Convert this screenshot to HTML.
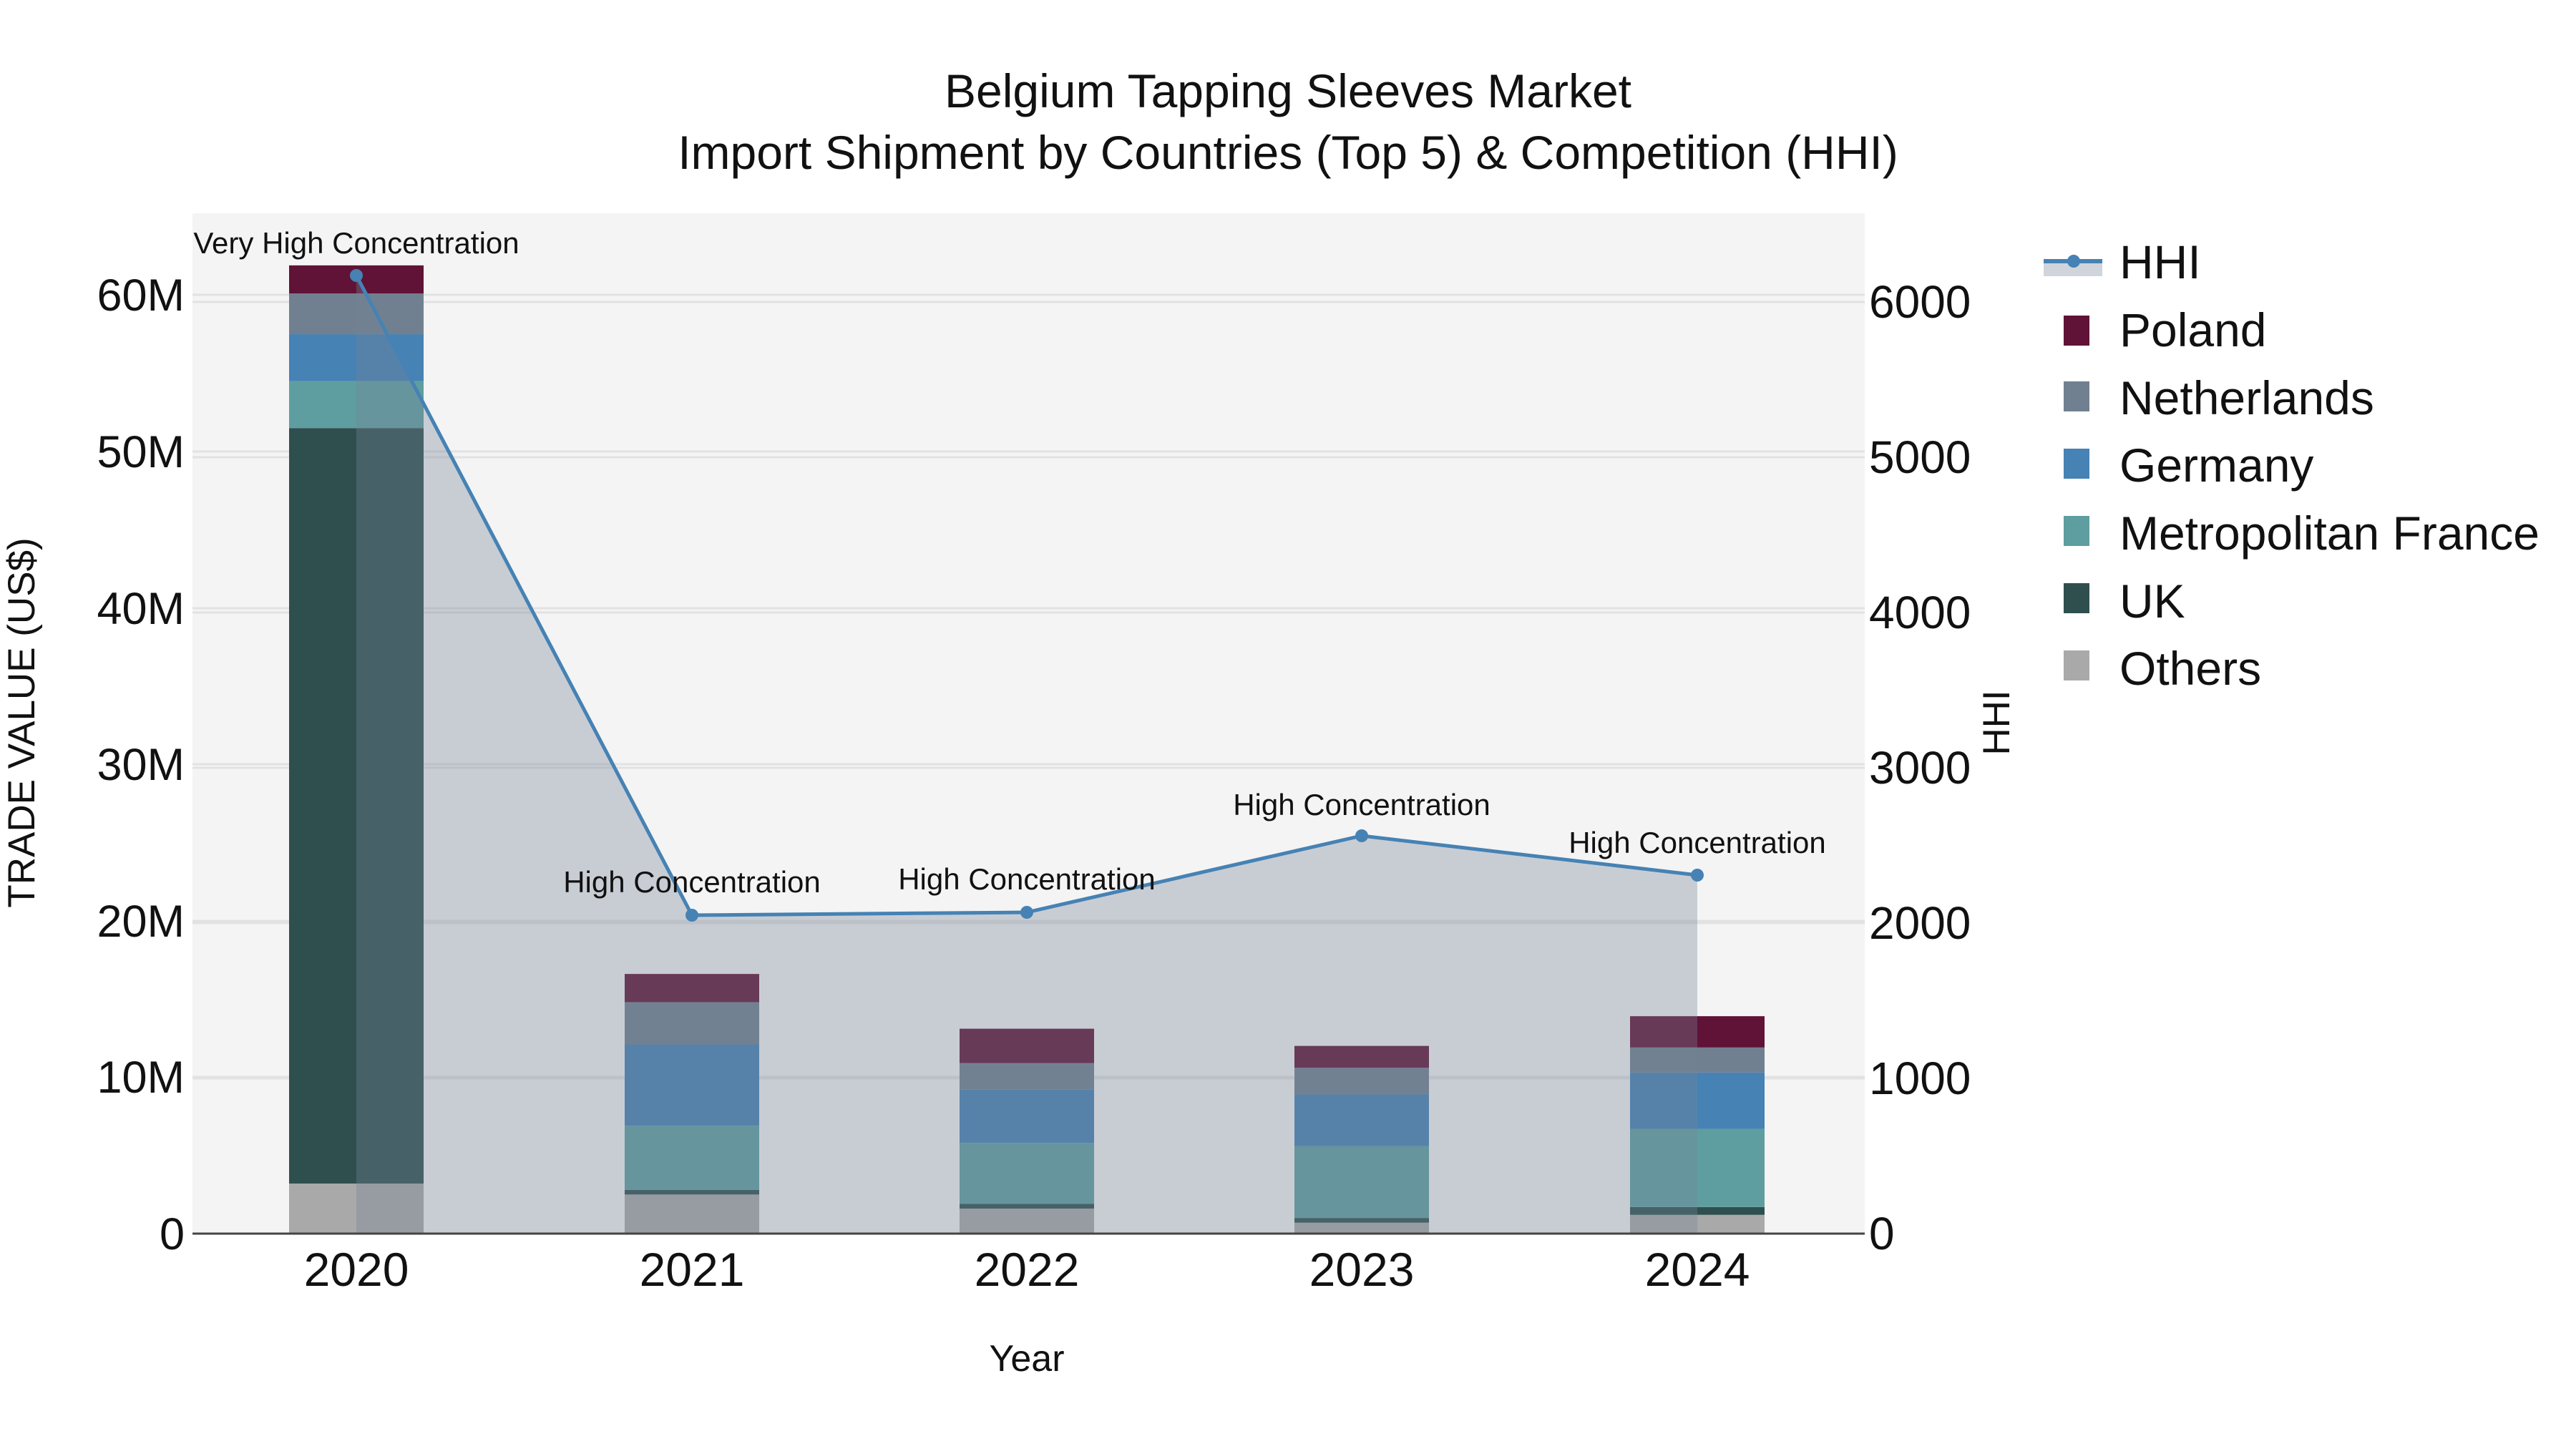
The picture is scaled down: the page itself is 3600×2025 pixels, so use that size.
<!DOCTYPE html>
<html><head><meta charset="utf-8"><style>
html,body{margin:0;padding:0;background:#fff}
svg{display:block}
text{font-family:"Liberation Sans",Arial,sans-serif;fill:#111}
</style></head><body>
<svg width="3600" height="2025" viewBox="0 0 3600 2025" xmlns="http://www.w3.org/2000/svg">
<rect x="0" y="0" width="3600" height="2025" fill="#fff"/>
<rect x="269" y="298" width="2337" height="1426" fill="#f4f4f4"/>
<g stroke="#e2e2e2" stroke-width="3">
<line x1="269" x2="2606" y1="1505" y2="1505"/>
<line x1="269" x2="2606" y1="1287" y2="1287"/>
<line x1="269" x2="2606" y1="1068" y2="1068"/>
<line x1="269" x2="2606" y1="850" y2="850"/>
<line x1="269" x2="2606" y1="631" y2="631"/>
<line x1="269" x2="2606" y1="412" y2="412"/>
<line x1="269" x2="2606" y1="1507" y2="1507"/>
<line x1="269" x2="2606" y1="1290" y2="1290"/>
<line x1="269" x2="2606" y1="1073" y2="1073"/>
<line x1="269" x2="2606" y1="856" y2="856"/>
<line x1="269" x2="2606" y1="639" y2="639"/>
<line x1="269" x2="2606" y1="422" y2="422"/>
</g>
<g transform="translate(0,1724) scale(1,-21.86)">
<rect x="404" width="188" y="0" height="3.2" fill="#a9a9a9"/>
<rect x="404" width="188" y="3.2" height="48.3" fill="#2f4f4f"/>
<rect x="404" width="188" y="51.5" height="3" fill="#5f9ea0"/>
<rect x="404" width="188" y="54.5" height="3" fill="#4682b4"/>
<rect x="404" width="188" y="57.5" height="2.6" fill="#708090"/>
<rect x="404" width="188" y="60.1" height="1.8" fill="#601336"/>
<rect x="873" width="188" y="0" height="2.5" fill="#a9a9a9"/>
<rect x="873" width="188" y="2.5" height="0.3" fill="#2f4f4f"/>
<rect x="873" width="188" y="2.8" height="4.1" fill="#5f9ea0"/>
<rect x="873" width="188" y="6.9" height="5.2" fill="#4682b4"/>
<rect x="873" width="188" y="12.1" height="2.7" fill="#708090"/>
<rect x="873" width="188" y="14.8" height="1.8" fill="#601336"/>
<rect x="1341" width="188" y="0" height="1.6" fill="#a9a9a9"/>
<rect x="1341" width="188" y="1.6" height="0.3" fill="#2f4f4f"/>
<rect x="1341" width="188" y="1.9" height="3.9" fill="#5f9ea0"/>
<rect x="1341" width="188" y="5.8" height="3.4" fill="#4682b4"/>
<rect x="1341" width="188" y="9.2" height="1.7" fill="#708090"/>
<rect x="1341" width="188" y="10.9" height="2.2" fill="#601336"/>
<rect x="1809" width="188" y="0" height="0.7" fill="#a9a9a9"/>
<rect x="1809" width="188" y="0.7" height="0.3" fill="#2f4f4f"/>
<rect x="1809" width="188" y="1.0" height="4.6" fill="#5f9ea0"/>
<rect x="1809" width="188" y="5.6" height="3.3" fill="#4682b4"/>
<rect x="1809" width="188" y="8.9" height="1.7" fill="#708090"/>
<rect x="1809" width="188" y="10.6" height="1.4" fill="#601336"/>
<rect x="2278" width="188" y="0" height="1.2" fill="#a9a9a9"/>
<rect x="2278" width="188" y="1.2" height="0.5" fill="#2f4f4f"/>
<rect x="2278" width="188" y="1.7" height="5.0" fill="#5f9ea0"/>
<rect x="2278" width="188" y="6.7" height="3.6" fill="#4682b4"/>
<rect x="2278" width="188" y="10.3" height="1.6" fill="#708090"/>
<rect x="2278" width="188" y="11.9" height="2.0" fill="#601336"/>
</g>
<polygon points="498,385 967,1279 1435,1275 1903,1168 2372,1223 2372,1724 498,1724" fill="rgba(118,133,153,0.35)"/>
<line x1="269" x2="2606" y1="1724" y2="1724" stroke="#444" stroke-width="3"/>
<polyline points="498,385 967,1279 1435,1275 1903,1168 2372,1223" fill="none" stroke="#4682b4" stroke-width="5"/>
<g fill="#4682b4">
<circle cx="498" cy="385" r="9"/><circle cx="967" cy="1279" r="9"/><circle cx="1435" cy="1275" r="9"/><circle cx="1903" cy="1168" r="9"/><circle cx="2372" cy="1223" r="9"/>
</g>
<g font-size="42" text-anchor="middle">
<text x="498" y="354">Very High Concentration</text>
<text x="967" y="1247">High Concentration</text>
<text x="1435" y="1243">High Concentration</text>
<text x="1903" y="1139">High Concentration</text>
<text x="2372" y="1192">High Concentration</text>
</g>
<g font-size="66" text-anchor="middle">
<text x="1800" y="150">Belgium Tapping Sleeves Market</text>
<text x="1800" y="236">Import Shipment by Countries (Top 5) &amp; Competition (HHI)</text>
</g>
<g font-size="63" text-anchor="end">
<text x="258" y="1746">0</text>
<text x="258" y="1527">10M</text>
<text x="258" y="1309">20M</text>
<text x="258" y="1090">30M</text>
<text x="258" y="872">40M</text>
<text x="258" y="653">50M</text>
<text x="258" y="434">60M</text>
</g>
<g font-size="64" text-anchor="start">
<text x="2612" y="1746">0</text>
<text x="2612" y="1529">1000</text>
<text x="2612" y="1312">2000</text>
<text x="2612" y="1095">3000</text>
<text x="2612" y="878">4000</text>
<text x="2612" y="661">5000</text>
<text x="2612" y="444">6000</text>
</g>
<g font-size="66" text-anchor="middle">
<text x="498" y="1797">2020</text>
<text x="967" y="1797">2021</text>
<text x="1435" y="1797">2022</text>
<text x="1903" y="1797">2023</text>
<text x="2372" y="1797">2024</text>
</g>
<text x="1435" y="1916" font-size="52" text-anchor="middle">Year</text>
<text transform="translate(48,1010) rotate(-90)" font-size="53" text-anchor="middle">TRADE VALUE (US$)</text>
<text transform="translate(2808,1010) rotate(-90)" font-size="53" text-anchor="middle">HHI</text>
<rect x="2856" y="366" width="82" height="20" fill="#d0d5dc"/>
<line x1="2856" x2="2938" y1="365" y2="365" stroke="#4682b4" stroke-width="6"/>
<circle cx="2898" cy="365" r="9" fill="#4682b4"/>
<g>
<rect x="2884" y="441" width="36" height="42" fill="#601336"/>
<rect x="2884" y="533" width="36" height="42" fill="#708090"/>
<rect x="2884" y="627" width="36" height="42" fill="#4682b4"/>
<rect x="2884" y="721" width="36" height="42" fill="#5f9ea0"/>
<rect x="2884" y="815" width="36" height="42" fill="#2f4f4f"/>
<rect x="2884" y="909" width="36" height="42" fill="#a9a9a9"/>
</g>
<g font-size="66">
<text x="2962" y="389">HHI</text>
<text x="2962" y="484">Poland</text>
<text x="2962" y="579">Netherlands</text>
<text x="2962" y="673">Germany</text>
<text x="2962" y="768">Metropolitan France</text>
<text x="2962" y="863">UK</text>
<text x="2962" y="957">Others</text>
</g>
</svg>
</body></html>
